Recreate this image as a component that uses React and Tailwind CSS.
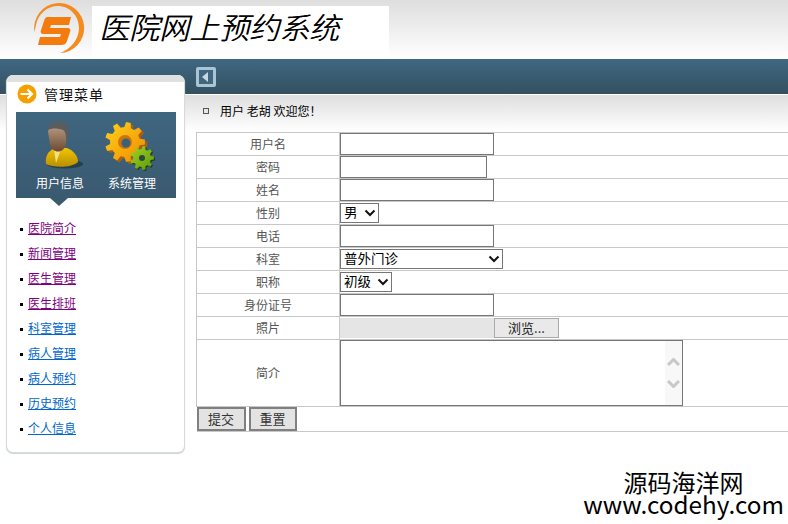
import React from 'react'

const menuItems = [
  { name: '医院简介', visited: true },
  { name: '新闻管理', visited: true },
  { name: '医生管理', visited: true },
  { name: '医生排班', visited: true },
  { name: '科室管理', visited: false },
  { name: '病人管理', visited: false },
  { name: '病人预约', visited: false },
  { name: '历史预约', visited: false },
  { name: '个人信息', visited: false },
]

const gearPoints = (cx, cy, outer, inner, teeth) => {
  const points = []
  const step = (Math.PI * 2) / teeth
  for (let i = 0; i < teeth; i++) {
    const a = i * step
    const corners = [
      [inner, a - step * 0.32],
      [outer, a - step * 0.17],
      [outer, a + step * 0.17],
      [inner, a + step * 0.32],
    ]
    corners.forEach(([r, t]) => {
      points.push(`${(cx + r * Math.cos(t)).toFixed(1)},${(cy + r * Math.sin(t)).toFixed(1)}`)
    })
  }
  return points.join(' ')
}

const Logo = () => (
  <svg width="52" height="54" viewBox="0 0 52 54" className="shrink-0">
    {/* outer ring */}
    <path d="M1.500 31 A25 25 0 1 1 27 52 C38 48 46 38 46 27 C46 14 36 5 25 5 C14 5 5 13 3 24 Z" fill="#f58a1f" />
    {/* S */}
    <path d="M14 16 H38 L36 24 H18 L17 27 H35 C37 27 38 29 37 31 L34 40 C33 43 31 44 28 44 H5 L7 36 H27 L28 33 H10 C8 33 7 31 8 29 L11 20 C12 17 13 16 14 16 Z" fill="#f47c0f" />
  </svg>
)

const PersonIcon = () => (
  <svg width="44" height="50" viewBox="0 0 44 50" className="ml-[6px]">
    <defs>
      <linearGradient id="skin" x1="0" y1="0" x2="0" y2="1">
        <stop offset="0" stop-color="#b89c86" />
        <stop offset="1" stop-color="#6e4a30" />
      </linearGradient>
      <linearGradient id="shirt" x1="0" y1="0" x2="0" y2="1">
        <stop offset="0" stop-color="#f2c400" />
        <stop offset="1" stop-color="#b98f00" />
      </linearGradient>
    </defs>
    <ellipse cx="24" cy="44" rx="18" ry="4.500" fill="#1d3342" opacity="0.7" />
    <path d="M5 44 C4 36 7 31 14 28 L26 28 C33 31 37 36 37 42 C30 48 13 48 5 44 Z" fill="url(#shirt)" />
    <path d="M13 29 L20 29 L15 43 Z" fill="#f3e08a" />
    <path d="M7 12 C7 3 25 3 26 12 L25 24 C23 34 11 34 9 24 Z" fill="url(#skin)" />
    <path d="M7 10 C8 2 17 0 22 2 C28 4 29 10 27 18 C26 20 25 20 25 18 C25 14 24 11 22 10 C16 8 11 8 7 10 Z" fill="#5a5c5e" />
  </svg>
)

const GearIcon = () => (
  <svg width="62" height="58" viewBox="0 0 62 58">
    <defs>
      <linearGradient id="gold" x1="0" y1="0" x2="1" y2="1">
        <stop offset="0" stop-color="#ffd21a" />
        <stop offset="1" stop-color="#f08a00" />
      </linearGradient>
      <linearGradient id="lime" x1="0" y1="0" x2="1" y2="1">
        <stop offset="0" stop-color="#a6d320" />
        <stop offset="1" stop-color="#58980f" />
      </linearGradient>
    </defs>
    <polygon points={gearPoints(26.500, 27, 20, 15, 9)} fill="#a85f10" />
    <polygon points={gearPoints(24, 25, 20, 15, 9)} fill="url(#gold)" />
    <circle cx="24" cy="25" r="7" fill="#c9750c" />
    <circle cx="25" cy="26" r="4.500" fill="#3d6078" />
    <polygon points={gearPoints(42, 42, 12, 9, 9)} fill="#22361a" />
    <polygon points={gearPoints(41, 41, 12, 9, 9)} fill="url(#lime)" />
    <circle cx="41" cy="41" r="3" fill="#2b4a3a" />
  </svg>
)

const SideMenu = () => (
  <aside className="ml-[6px] -mt-[20px] h-[378px] w-[179px] shrink-0 overflow-hidden rounded-[7px] border border-[#d3dcd6] border-t-0 bg-white shadow-[0_1px_1px_#cfd8d2]">
    <div className="h-[7px] bg-[#e0e0e0]" />
    <div className="flex h-[30px] items-center gap-[7px] pb-[6px] pl-[10px]">
      <svg width="20" height="20" viewBox="0 0 20 20" className="shrink-0">
        <circle cx="10" cy="10" r="9.500" fill="#f6a000" />
        <path d="M3.500 10 H15 M10.500 5.500 L15 10 L10.500 14.500" stroke="#fff" stroke-width="2.200" fill="none" />
      </svg>
      <span className="text-[14px] tracking-[1px] text-[#111]">管理菜单</span>
    </div>
    <div className="relative ml-[9px] h-[86px] w-[160px] bg-[linear-gradient(#3f6680,#3a5a70)]">
      <div className="flex h-full">
        <div className="flex w-[88px] flex-col items-center">
          <div className="h-[63px] pt-[8px]"><PersonIcon /></div>
          <span className="text-[12px] leading-[16px] text-white">用户信息</span>
        </div>
        <div className="flex w-[56px] flex-col items-center">
          <div className="h-[63px] pt-[5px]"><GearIcon /></div>
          <span className="whitespace-nowrap text-[12px] leading-[16px] text-white">系统管理</span>
        </div>
      </div>
      <div className="absolute left-[34px] top-[86px] h-0 w-0 border-x-[9px] border-t-[8px] border-x-transparent border-t-[#3a5a70]" />
    </div>
    <ul className="mt-[17px] flex flex-col pl-[13px]">
      {menuItems.map((item) => (
        <li key={item.name} className="flex h-[25px] items-center gap-[5px]">
          <span className="mt-[3px] h-[3px] w-[3px] bg-black" />
          <a href="#" className={item.visited ? 'text-[12px] text-[#800080] underline' : 'text-[12px] text-[#0066cc] underline'}>
            {item.name}
          </a>
        </li>
      ))}
    </ul>
  </aside>
)

const Row = ({ label, tall, children }) => (
  <tr className={tall ? 'h-[67px]' : 'h-[23px]'}>
    <td className="w-[143px] border border-[#c8c8c8] p-0 pb-[1px] text-center align-middle text-[12px] leading-[14px] text-[#555]">{label}</td>
    <td className="border border-[#c8c8c8] p-0 align-top">{children}</td>
  </tr>
)

const TextInput = ({ width }) => (
  <input type="text" className={`block h-[22px] ${width} border border-[#767676] bg-white`} />
)

const NativeSelect = ({ width, options }) => (
  <div className={`relative mt-[1px] h-[20px] ${width}`}>
    <select className="block h-[20px] w-full appearance-none rounded-none border border-[#767676] bg-white pb-[3px] pl-[3px] text-[13.500px] leading-[14px] text-black">
      {options.map((o) => <option key={o}>{o}</option>)}
    </select>
    <svg width="12" height="8" viewBox="0 0 12 8" className="pointer-events-none absolute right-[3px] top-[6px]">
      <path d="M1.500 1.500 L6 6 L10.500 1.500" stroke="#111" stroke-width="2" fill="none" />
    </svg>
  </div>
)

const App = () => {
  return (
    <div className="relative h-[524px] w-[788px] overflow-hidden bg-white font-['Noto_Sans_CJK_SC','Liberation_Sans',sans-serif]">
      {/* top logo */}
      <header className="h-[59px] bg-[linear-gradient(#dedede,#fff)] pl-[33px]">
        <div className="flex h-[59px] items-start">
          <div className="pt-[1px]"><Logo /></div>
          <div className="mt-[6px] ml-[7px] flex h-[53px] w-[297px] items-start bg-white pl-[7px]">
            <span className="-mt-[1px] whitespace-nowrap text-[30px] font-light italic leading-[42px] text-black [text-shadow:0.5px_0_0_#000]">医院网上预约系统</span>
          </div>
        </div>
      </header>

      {/* blue bar */}
      <div className="flex h-[36px] items-start border-b border-white bg-[linear-gradient(#3f6882,#33505f)] pl-[196px] pt-[8px]">
        <div className="flex h-[20px] w-[20px] items-center justify-center rounded-[2px] bg-[#a9c4d2]">
          <div className="flex h-[14px] w-[14px] items-center justify-center bg-[#3f6880]">
            <div className="-ml-[2px] h-0 w-0 border-y-[5px] border-r-[6px] border-y-transparent border-r-[#c8d8e0]" />
          </div>
        </div>
      </div>

      <div className="flex h-[429px] bg-[linear-gradient(#dedede,#fff_36px)]">
        <SideMenu />
        <main className="ml-[11px] min-w-0 flex-1 overflow-hidden">
          <div className="flex h-[37px] items-center pb-[5px] pl-[7px]">
            <span className="h-[6px] w-[6px] border border-[#555] bg-[#e8e8e8]" />
            <span className="ml-[11px] text-[12px] text-black">用户 老胡 欢迎您！</span>
          </div>
          <table className="w-[600px] table-fixed border-collapse">
            <tbody>
              <Row label="用户名"><TextInput width="w-[154px]" /></Row>
              <Row label="密码"><TextInput width="w-[147px]" /></Row>
              <Row label="姓名"><TextInput width="w-[154px]" /></Row>
              <Row label="性别"><NativeSelect width="w-[39px]" options={['男', '女']} /></Row>
              <Row label="电话"><TextInput width="w-[154px]" /></Row>
              <Row label="科室"><NativeSelect width="w-[163px]" options={['普外门诊']} /></Row>
              <Row label="职称"><NativeSelect width="w-[52px]" options={['初级']} /></Row>
              <Row label="身份证号"><TextInput width="w-[154px]" /></Row>
              <Row label="照片">
                <div className="mt-[1px] flex h-[20px]">
                  <div className="w-[154px] bg-[#e5e5e5]" />
                  <button type="button" className="w-[65px] border border-[#aaa] bg-[#e9e9e9] text-[13px] leading-[16px] text-[#222]">浏览...</button>
                </div>
              </Row>
              <Row label="简介" tall>
                <div className="flex h-[66px] w-[343px] border border-[#767676] bg-white">
                  <textarea className="min-w-0 flex-1 resize-none overflow-hidden outline-none" />
                  <div className="flex w-[17px] flex-col items-center gap-[14px] bg-[#f8f8f8] pt-[17px]">
                    <svg width="13" height="8" viewBox="0 0 13 8"><path d="M1 7 L6.500 1.500 L12 7" stroke="#c8c8c8" stroke-width="3" fill="none" /></svg>
                    <svg width="13" height="8" viewBox="0 0 13 8"><path d="M1 1 L6.500 6.500 L12 1" stroke="#c8c8c8" stroke-width="3" fill="none" /></svg>
                  </div>
                </div>
              </Row>
              <tr className="h-[25px]">
                <td colSpan={2} className="border-b border-[#c8c8c8] p-0 align-top">
                  <div className="flex gap-[3px]">
                    <button type="button" className="h-[24px] w-[49px] border-2 border-[#808080] bg-[#e3e3e3] text-[13px] text-[#333]">提交</button>
                    <button type="button" className="h-[24px] w-[48px] border-2 border-[#808080] bg-[#e3e3e3] text-[13px] text-[#333]">重置</button>
                  </div>
                </td>
              </tr>
            </tbody>
          </table>
        </main>
      </div>

      {/* watermark */}
      <div className="absolute right-[4px] top-[471px] flex flex-col items-center text-black">
        <span className="text-[24px] leading-[22px]">源码海洋网</span>
        <span className="text-[24.300px] leading-[22px]">www.codehy.com</span>
      </div>
    </div>
  )
}

export default App
